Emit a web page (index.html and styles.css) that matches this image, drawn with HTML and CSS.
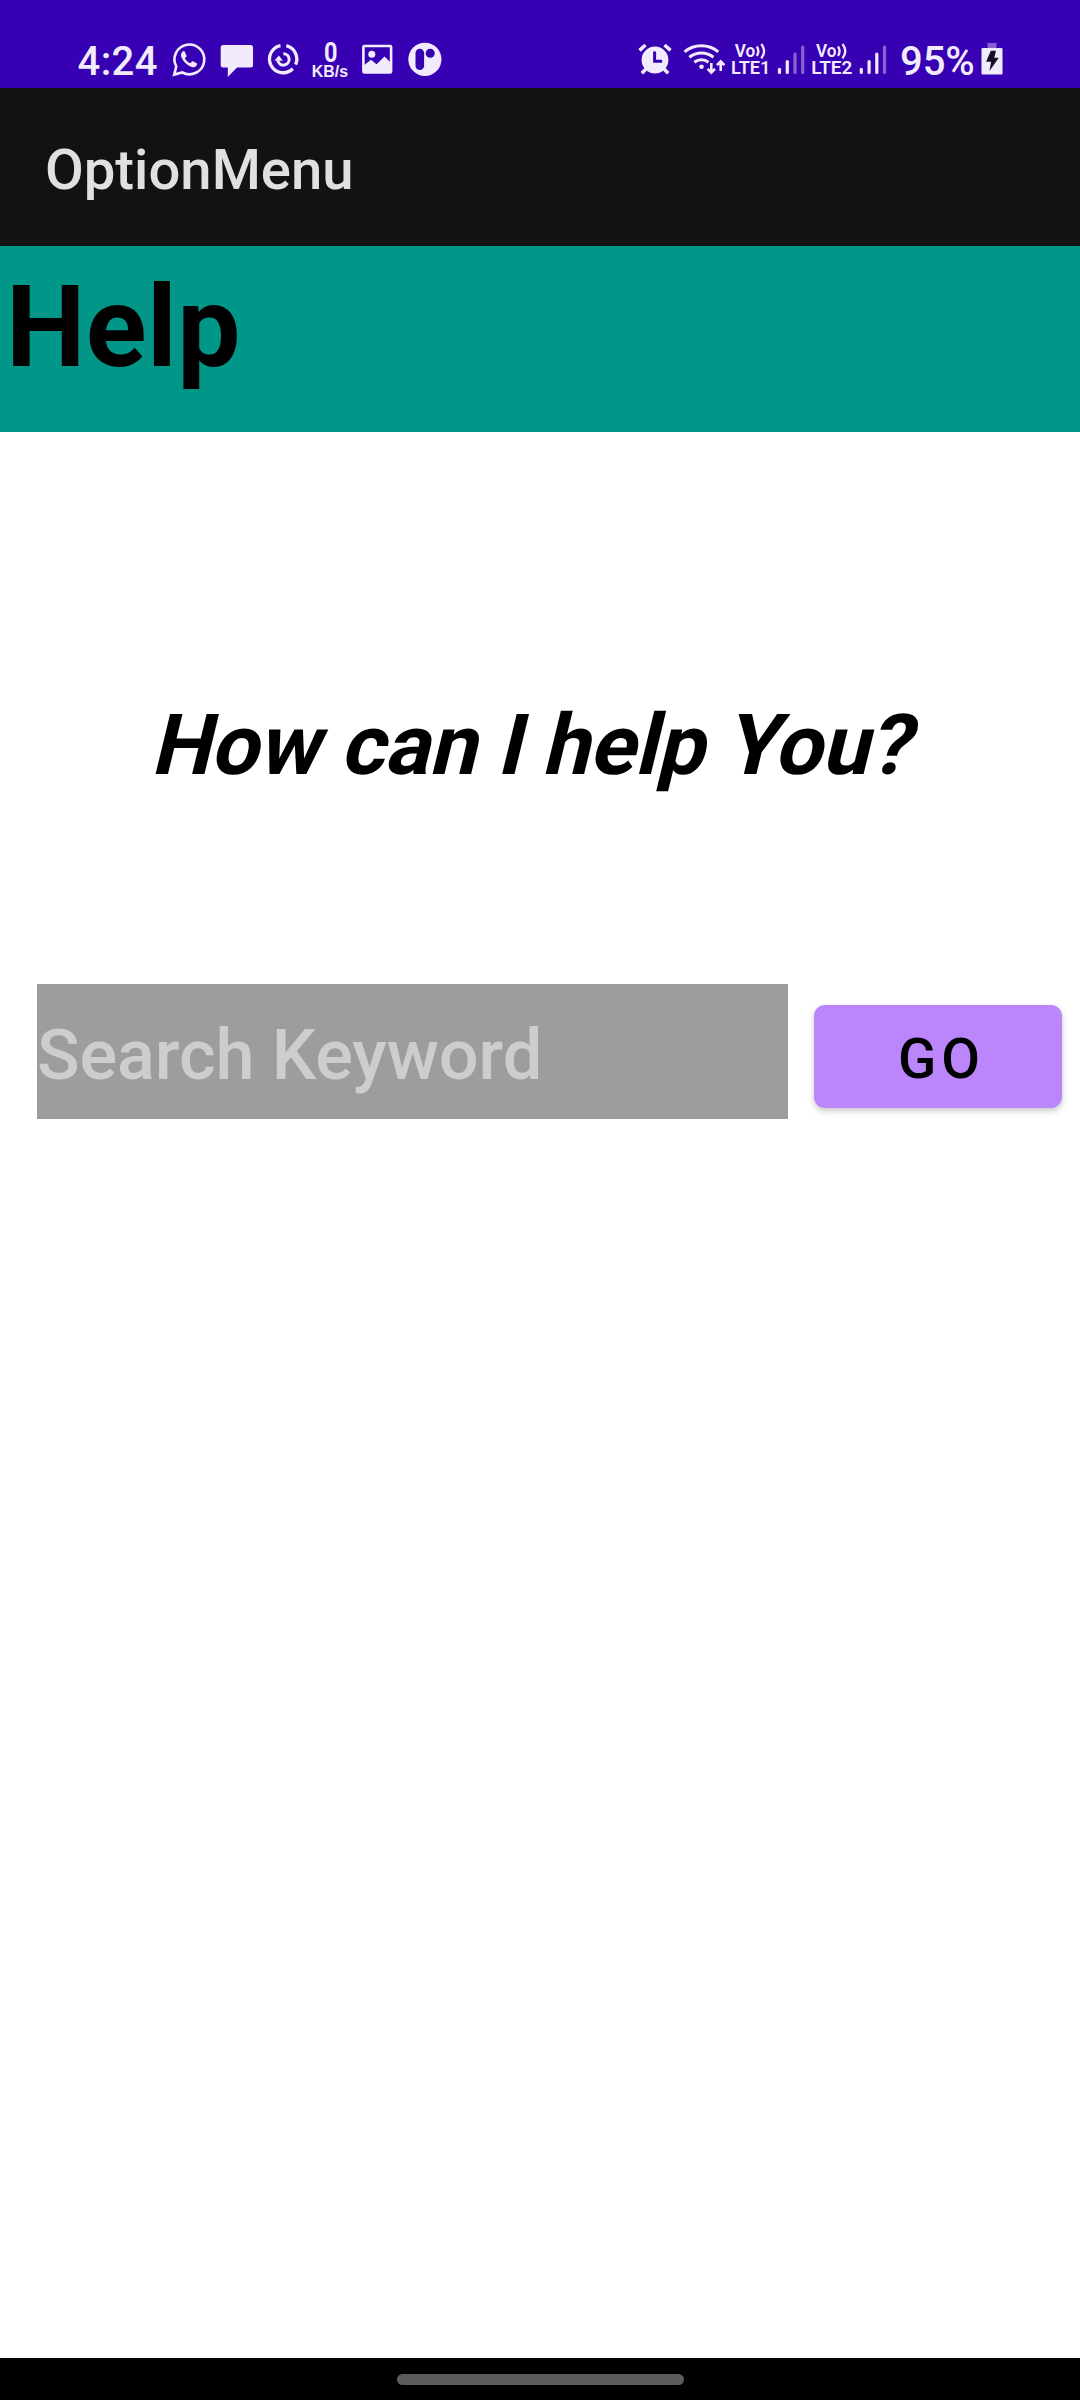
FILE: index.html
```html
<!DOCTYPE html>
<html lang="en">
<head>
<meta charset="utf-8">
<title>OptionMenu</title>
<link rel="stylesheet" href="styles.css">
</head>
<body>
<div class="screen">
  <header class="status">
    <div class="status-group">
      <span class="status-text clock">4:24</span>
      <svg class="icon" width="36" height="40" viewBox="172 40 36 40">
        <path class="line" stroke-width="2.6" d="M174.2 74.6l2.1-8.1a14.9 14.9 0 1 1 6 6z"/>
        <path class="fill" d="M182.8 51.4c-2.1 1.4-2.4 4.100-.9 6.900 2.200 4.200 5.300 7.100 9.600 8.600 2.700 1 5.800-.5 5.600-3.400l-4.600-2.400-2.200 2.200c-2.400-.9-4.200-2.700-5.400-5.100l1.800-2-1.900-4.400c-.5-.8-1.300-.9-2-.4z"/>
      </svg>
      <svg class="icon" width="34" height="40" viewBox="219.500 40 34 40">
        <path class="fill" d="M222.700 45h27.300a2.500 2.500 0 0 1 2.500 2.500v17.500a2.500 2.500 0 0 1-2.500 2.500h-13.500l-9.200 9.500v-9.500h-4.600a2.500 2.500 0 0 1-2.500-2.500V47.500a2.500 2.500 0 0 1 2.500-2.500z"/>
      </svg>
      <svg class="icon" width="35" height="40" viewBox="265 40 35 40">
        <g class="line" stroke-width="3.300">
          <path d="M280.500 45.600a13.700 13.700 0 1 0 12.300 23.200"/>
          <path d="M286.300 45.700a13.700 13.700 0 0 1 9.300 18.900"/>
          <path stroke-width="3" d="M283.300 53.700a5.700 5.700 0 1 1-5.400 7"/>
        </g>
        <path class="fill" d="M274.300 60.800l4.600-5.400 3.900 5.400z"/>
      </svg>
      <svg class="icon" width="37" height="40" viewBox="311.500 40 37 40">
        <text class="label" x="323.500" y="62" font-size="28" textLength="13.500" lengthAdjust="spacingAndGlyphs">0</text>
        <text class="label speed" x="311.300" y="76.700" font-size="15.700" textLength="36.200" lengthAdjust="spacingAndGlyphs">KB/s</text>
      </svg>
      <svg class="icon" width="35" height="40" viewBox="360 40 35 40">
        <path class="fill" fill-rule="evenodd" d="M364.500 44.700h25.500a2.400 2.400 0 0 1 2.400 2.400v24.300a2.400 2.400 0 0 1-2.400 2.400h-25.500a2.400 2.400 0 0 1-2.400-2.400V47.100a2.400 2.400 0 0 1 2.400-2.400zM364.700 47.300v17.500l6.300-5 5.500 4.500 8-7.800 5.300 5.200V47.300z"/>
        <circle class="fill" cx="371.800" cy="54.200" r="3.500"/>
      </svg>
      <svg class="icon" width="36" height="40" viewBox="406.500 40 36 40">
        <circle class="fill" cx="424.400" cy="59.300" r="16.600"/>
        <rect class="hole" x="415" y="48.700" width="8.600" height="21.400" rx="4.300"/>
        <circle class="hole" cx="429.700" cy="53.300" r="4.500"/>
      </svg>
    </div>
    <div class="status-group">
      <svg class="icon" width="39" height="40" viewBox="637 40 39 40">
        <circle class="fill" cx="655" cy="60" r="13.400"/>
        <g class="line" stroke-width="3.600"><path d="M639.500 50.300l6-5.300M670.500 50.300l-6-5.300M646 69l-4.200 4.300M664 69l4.200 4.300"/></g>
        <path class="cut" d="M654.600 51.500v9.700h7.500"/>
      </svg>
      <svg class="icon" width="41.500" height="40" viewBox="682 40 41.500 40">
        <g class="line" stroke-width="3">
          <path d="M684.500 51.800a27 27 0 0 1 33.800 0"/>
          <path d="M689.300 57.300a19.500 19.500 0 0 1 24.200 0"/>
          <path d="M694.300 62.300a11.600 11.600 0 0 1 14.200 0"/>
        </g>
        <circle class="fill" cx="701.500" cy="66.800" r="2.300"/>
        <g class="line" stroke-width="2.600"><path d="M711.300 63v9M707.600 68.800l3.700 3.800 3.700-3.800M720.700 71v-9M717 65.200l3.700-3.800 3.700 3.800"/></g>
      </svg>
      <svg class="icon" width="41.500" height="40" viewBox="729.500 40 41.500 40">
        <text class="label small" x="734.300" y="57" font-size="18" textLength="20.500" lengthAdjust="spacingAndGlyphs">Vo</text>
        <path class="line" stroke-width="2.300" d="M756.300 46.500q3.200 4.700 0 9.400M760.800 44q5.600 7.200 0 14.400"/>
        <text class="label small" x="730.500" y="74.300" font-size="18.700" textLength="39.500" lengthAdjust="spacingAndGlyphs">LTE1</text>
      </svg>
      <svg class="icon" width="28" height="40" viewBox="777 40 28 40">
        <g class="line bars" stroke-width="3.200"><path d="M779.500 69.300v3.200M787.300 61.500v11"/><path class="dim" d="M795 54v18.500M802.700 47v25.500"/></g>
      </svg>
      <svg class="icon" width="42" height="40" viewBox="811 40 42 40">
        <text class="label small" x="816" y="57" font-size="18" textLength="20.500" lengthAdjust="spacingAndGlyphs">Vo</text>
        <path class="line" stroke-width="2.300" d="M838 46.500q3.200 4.700 0 9.400M842.500 44q5.600 7.200 0 14.400"/>
        <text class="label small" x="811.200" y="74.300" font-size="18.700" textLength="41.200" lengthAdjust="spacingAndGlyphs">LTE2</text>
      </svg>
      <svg class="icon" width="28" height="40" viewBox="859 40 28 40">
        <g class="line bars" stroke-width="3.200"><path d="M861.300 69.300v3.200M869.100 61.500v11M876.800 54v18.500"/><path class="dim" d="M884.500 47v25.500"/></g>
      </svg>
      <span class="status-text battery-level">95%</span>
      <svg class="icon" width="22" height="40" viewBox="980.500 40 22 40">
        <path class="fill dim" d="M987 43h9v5h-9z"/>
        <rect class="fill" x="981" y="48" width="21" height="26.500" rx="1.200"/>
        <path class="bolt" d="M990.300 50.800h5.200l-1.700 7h4.500l-9.300 13.300 1.600-9.300h-5z"/>
      </svg>
    </div>
  </header>
  <div class="appbar">OptionMenu</div>
  <h1 class="banner">Help</h1>
  <main class="content">
    <h2 class="question">How can I help You?</h2>
    <form class="search">
      <input class="keyword" type="text" placeholder="Search Keyword" aria-label="Search Keyword">
      <button class="go" type="button">GO</button>
    </form>
  </main>
  <footer class="nav"><div class="pill"></div></footer>
</div>
</body>
</html>
```
FILE: styles.css
```css
* { box-sizing: border-box; }
body { margin: 0; font-family: Roboto, sans-serif; }
h1, h2 { margin: 0; }
.screen {
  width: 1080px;
  height: 2400px;
  display: flex;
  flex-direction: column;
  background: #fff;
  overflow: hidden;
}
.status {
  height: 88px;
  flex: none;
  display: flex;
  justify-content: space-between;
  padding: 40px 77.500px 0 77px;
  background: #3700b3;
  color: #f2ebfd;
}
.status-group { display: flex; align-items: flex-start; }
.status-group:first-child { gap: 11.500px; }
.status-group:last-child { gap: 6px; }
.status-text { font-size: 40px; font-weight: 500; line-height: 43px; white-space: nowrap; }
.clock { width: 83.500px; padding-left: .5px; letter-spacing: .4px; }
.battery-level { width: 79px; margin: 0 -4.500px 0 7px; letter-spacing: -.1px; }
.icon { display: block; flex: none; overflow: visible; }
.fill { fill: #f2ebfd; }
.line { fill: none; stroke: #f2ebfd; }
.bars { stroke-linecap: round; }
.dim { opacity: .42; }
.hole { fill: #3700b3; }
.cut { fill: none; stroke: #3700b3; stroke-width: 3; }
.bolt { fill: #15101f; }
.label { fill: #f2ebfd; font-family: Roboto, sans-serif; font-weight: 700; }
.small { font-weight: 600; }
.speed { font-family: "Liberation Sans", sans-serif; }
.appbar {
  height: 158px;
  flex: none;
  display: flex;
  align-items: center;
  padding: 6px 45px 0;
  background: #121212;
  color: #e0e0e0;
  font-size: 56.250px;
  font-weight: 500;
}
.banner {
  height: 186px;
  flex: none;
  padding-left: 6px;
  background: #009688;
  color: #000;
  font-size: 112.500px;
  font-weight: 700;
  line-height: 163px;
  letter-spacing: .4px;
}
.content { flex: 1; padding-top: 264px; }
.question {
  width: max-content;
  margin-left: 150px;
  font-size: 84.375px;
  font-weight: 700;
  line-height: 100px;
  letter-spacing: -.2px;
  white-space: nowrap;
  transform: skewX(-13.600deg);
  transform-origin: 0 79px;
}
.search {
  display: flex;
  align-items: flex-start;
  gap: 26px;
  margin-top: 188px;
  padding-left: 37px;
}
.keyword {
  width: 751px;
  height: 135px;
  padding: 7px 0 0;
  border: 0;
  border-radius: 0;
  background: #9e9d9b;
  font: 500 70.300px Roboto, sans-serif;
  letter-spacing: -.1px;
}
.keyword::placeholder { color: #cdcdcd; opacity: 1; }
.go {
  width: 248px;
  height: 103px;
  margin-top: 21px;
  padding: 4px 0 0 7px;
  border: 0;
  border-radius: 11px;
  background: #bb86fc;
  box-shadow: 0 3px 6px rgba(0, 0, 0, .22);
  color: #000;
  font: 500 56.250px Roboto, sans-serif;
  letter-spacing: 5px;
}
.nav {
  height: 42px;
  flex: none;
  display: flex;
  justify-content: center;
  padding-top: 15.500px;
  background: #000;
}
.pill { width: 287px; height: 11px; border-radius: 6px; background: #5c5c5c; }
```
